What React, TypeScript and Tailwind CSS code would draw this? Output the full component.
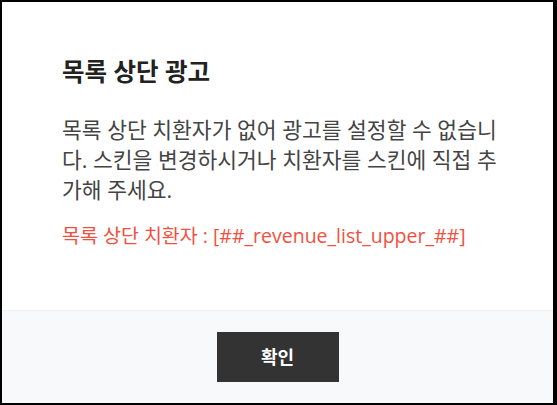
export default function App() {
  return (
    <div className="w-[557px] h-[405px] bg-black pt-[2px] pl-[2px] pr-[4px] pb-[2px]">
      <div
        className="flex flex-col h-full bg-white"
        style={{ fontFamily: '"Open Sans", "Noto Sans CJK KR", sans-serif' }}
      >
        <div className="flex-1 px-[60px] pt-[54px]">
          <h2 className="text-[24.5px] leading-[32px] font-bold text-[#222]">목록 상단 광고</h2>
          <p className="mt-[27px] text-[21.5px] leading-[30px] text-[#444] w-[445px]">
            목록 상단 치환자가 없어 광고를 설정할 수 없습니다. 스킨을 변경하시거나 치환자를 스킨에 직접 추가해 주세요.
          </p>
          <p className="mt-[17px] text-[19.5px] leading-[28px] text-[#f2503f]">
            목록 상단 치환자 : [##_revenue_list_upper_##]
          </p>
        </div>
        <div className="h-[93px] border-t border-[#eef0f2] bg-[#f8f9fb] flex justify-center pt-[21px]">
          <button className="w-[122px] h-[50px] bg-[#333] text-white text-[18px] font-bold">확인</button>
        </div>
      </div>
    </div>
  );
}
